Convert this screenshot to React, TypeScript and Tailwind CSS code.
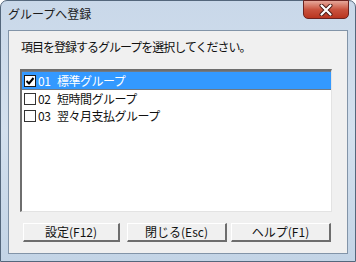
const jp = { fontFamily: '"Noto Sans CJK JP", "Noto Sans", sans-serif' };

const groups = [
  { no: '01', name: '標準グループ', checked: true },
  { no: '02', name: '短時間グループ', checked: false },
  { no: '03', name: '翌々月支払グループ', checked: false },
];

function CheckBox({ checked, selected }: { checked: boolean; selected: boolean }) {
  return (
    <div
      className={`w-[12px] h-[12px] border flex items-center justify-center ${
        selected ? 'border-[#1a1a1a] bg-white' : 'border-[#333] bg-white'
      }`}
    >
      {checked && (
        <svg width="10" height="10" viewBox="0 0 10 10">
          <path d="M1.5 5 L4 7.5 L8.5 2" stroke="#000" strokeWidth="2" fill="none" />
        </svg>
      )}
    </div>
  );
}

function Button({ label, width }: { label: string; width: string }) {
  return (
    <div
      className={`${width} h-[19px] flex items-center justify-center text-[12px] text-[#111] bg-[#f0f0f0] border-t border-l border-t-white border-l-white border-r-[2px] border-b-[2px] border-r-[#6d6d6d] border-b-[#6d6d6d]`}
    >
      {label}
    </div>
  );
}

export default function App() {
  return (
    <div
      className="w-[356px] h-[262px] flex flex-col rounded-t-[7px] border border-[#54677c] bg-gradient-to-b from-[#c9d8e9] via-[#d3e0ee] to-[#c3d4e6]"
      style={jp}
    >
      <div className="h-[29px] flex items-start justify-between pl-[7px] pr-[6px]">
        <span className="mt-[5px] text-[12px] text-[#1b1b1b] leading-[16px]">グループへ登録</span>
        <div className="w-[46px] h-[19px] -mt-px rounded-b-[5px] border border-[#6b2320] bg-gradient-to-b from-[#e5a79a] via-[#c9533f] to-[#b9351f] flex items-center justify-center">
          <svg width="14" height="12" viewBox="0 0 14 12">
            <path d="M2.5 1.5 L11.5 10.5 M11.5 1.5 L2.5 10.5" stroke="#4a1a14" strokeWidth="4" strokeLinecap="round" />
            <path d="M2.5 1.5 L11.5 10.5 M11.5 1.5 L2.5 10.5" stroke="#ffffff" strokeWidth="2.2" strokeLinecap="round" />
          </svg>
        </div>
      </div>

      <div className="flex-1 mx-[7px] mb-[7px] border border-[#8294a8] bg-[#f0f0f0] flex flex-col">
        <div className="pl-[12px] pt-[8px] text-[12px] leading-[15px] text-[#111] tracking-[-1px]">
          項目を登録するグループを選択してください。
        </div>

        <div className="ml-[11px] mt-[15px] w-[312px] h-[143px] bg-white border-t-2 border-l-2 border-t-[#6e6e6e] border-l-[#6e6e6e] border-r border-b border-r-[#e3e3e3] border-b-[#e3e3e3] flex flex-col">
          {groups.map((g, i) => {
            const selected = i === 0;
            return (
              <div
                key={g.no}
                className={`flex items-center pl-[2px] text-[12px] tracking-[-0.5px] ${
                  selected
                    ? 'h-[19px] bg-[#3399ff] text-white border-y border-[#6f7a86]'
                    : 'h-[17px] text-[#111]'
                }`}
              >
                <CheckBox checked={g.checked} selected={selected} />
                <span className="w-[19px] ml-[2px] leading-[15px]">{g.no}</span>
                <span className="leading-[15px]">{g.name}</span>
              </div>
            );
          })}
        </div>

        <div className="flex items-start mt-[11px] ml-[14px]">
          <Button label="設定(F12)" width="w-[97px]" />
          <div className="w-[7px]" />
          <Button label="閉じる(Esc)" width="w-[100px]" />
          <div className="w-[4px]" />
          <Button label="ヘルプ(F1)" width="w-[100px]" />
        </div>
      </div>
    </div>
  );
}
